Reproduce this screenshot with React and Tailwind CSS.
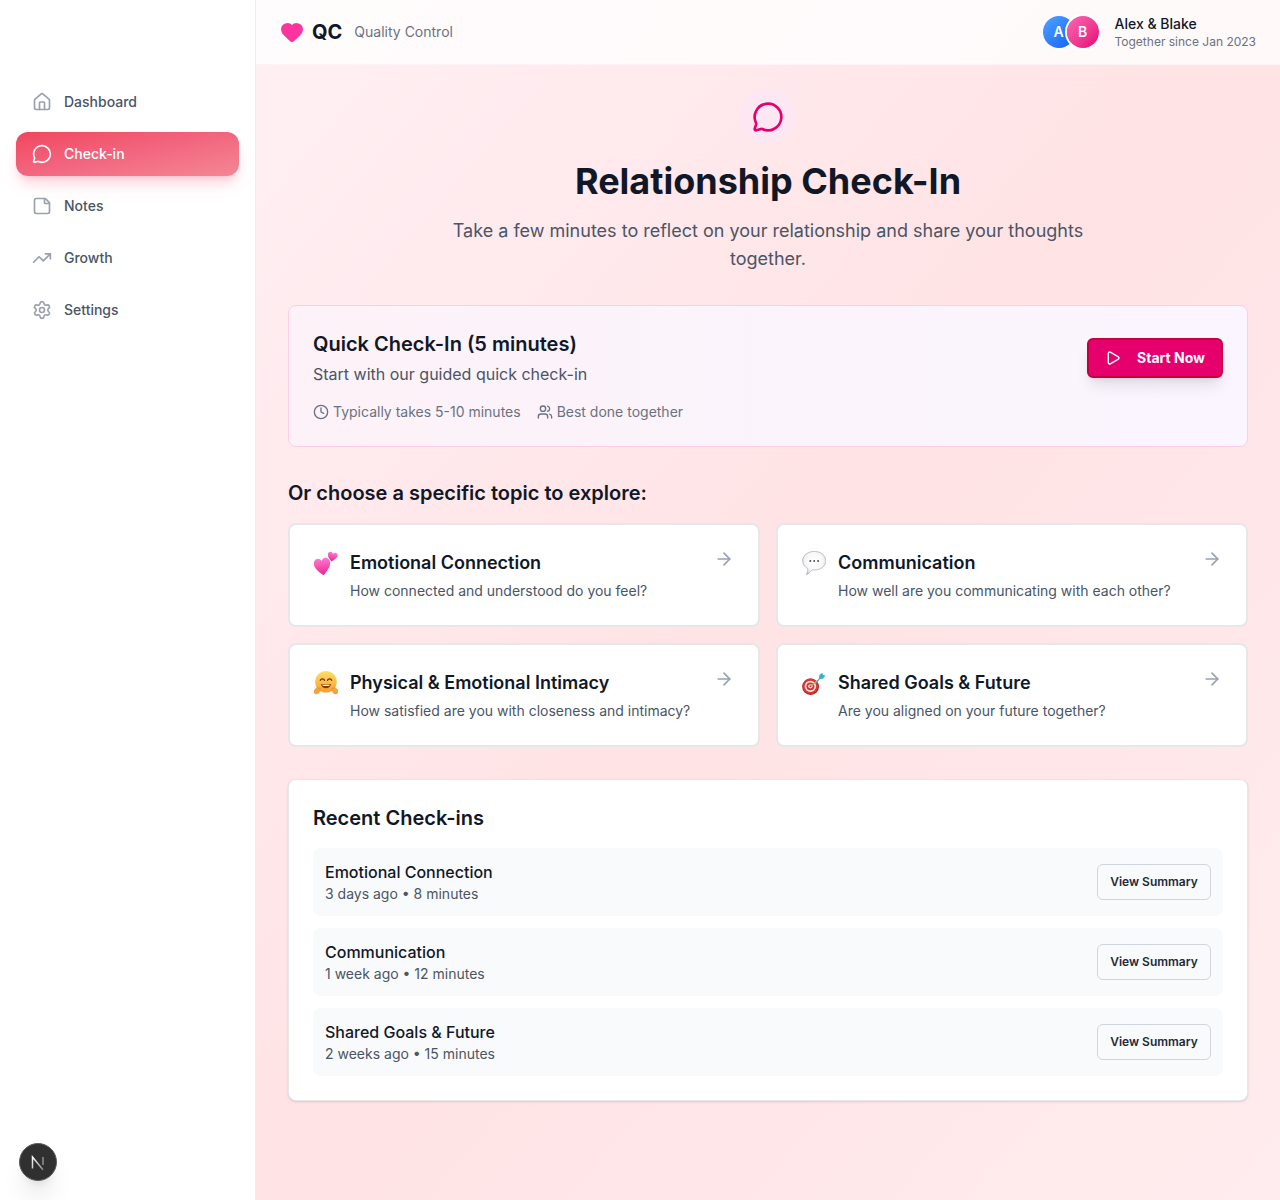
import { ArrowRight, Clock, Heart, House, MessageCircle, Play, Settings, StickyNote, TrendingUp, Users } from "lucide-react";

const NAV = [
  { label: "Dashboard", icon: House },
  { label: "Check-in", icon: MessageCircle, active: true },
  { label: "Notes", icon: StickyNote },
  { label: "Growth", icon: TrendingUp },
  { label: "Settings", icon: Settings },
];

const HEART = "M12 22C5.500 16.500 1 12.500 1 7.500 1 3.900 3.800 1.500 6.800 1.500 9 1.500 11 2.700 12 5 13 2.700 15 1.500 17.200 1.500 20.200 1.500 23 3.900 23 7.500 23 12.500 18.500 16.500 12 22Z";

function HeartsEmoji() {
  return (
    <svg width="24" height="24" viewBox="0 0 24 24">
      <defs>
        <linearGradient id="hearts" x1="0" y1="0" x2="0" y2="1">
          <stop offset="0" stopColor="#ff7ad0" />
          <stop offset="1" stopColor="#e9258f" />
        </linearGradient>
      </defs>
      <path d={HEART} fill="url(#hearts)" transform="translate(-0.500 6) rotate(-8 8 9) scale(0.74 0.84)" />
      <path d={HEART} fill="url(#hearts)" transform="translate(13 0.500) rotate(12 5 5) scale(0.45)" />
    </svg>
  );
}

function BubbleEmoji() {
  return (
    <svg width="24" height="24" viewBox="0 0 24 24">
      <defs>
        <radialGradient id="bubble" cx=".5" cy=".42" r=".62">
          <stop offset="0" stopColor="#ffffff" />
          <stop offset=".6" stopColor="#f8f8fa" />
          <stop offset=".85" stopColor="#dfe0e4" />
          <stop offset="1" stopColor="#a9abb2" />
        </radialGradient>
      </defs>
      <path d="M12.300.4C18.700.4 23.800 4.500 23.800 9.800S18.700 19 12.300 19c-.8 0-1.600-.1-2.300-.2-1.400 2-3.700 4.300-5.600 4.800 1.100-2 1.500-4 1.300-6C2.700 15.900.6 13 .6 9.800.6 4.500 5.900.4 12.300.4Z" fill="url(#bubble)" stroke="#a9abb2" strokeWidth=".7" />
      <circle cx="8.300" cy="10" r="1" fill="#4d5057" />
      <circle cx="12.200" cy="10" r="1" fill="#4d5057" />
      <circle cx="16.100" cy="10" r="1" fill="#4d5057" />
    </svg>
  );
}

function HugEmoji() {
  return (
    <svg width="24" height="24" viewBox="0 0 24 24">
      <defs>
        <linearGradient id="hug" x1="0" y1="0" x2="0" y2="1">
          <stop offset="0" stopColor="#ffdf66" />
          <stop offset="1" stopColor="#fa9c2c" />
        </linearGradient>
      </defs>
      <circle cx="12" cy="10.800" r="10.800" fill="url(#hug)" />
      <path d="M6.300 9.300c.8-1.800 3.400-1.800 4.200 0M13.500 9.300c.8-1.800 3.400-1.800 4.200 0" fill="none" stroke="#5f3410" strokeWidth="1.300" strokeLinecap="round" />
      <path d="M7 13c3.200 1 6.800 1 10 0-.4 2.700-2.400 4.300-5 4.300S7.400 15.700 7 13Z" fill="#7a3f12" />
      <path d="M8.300 13.700c2.300.5 5.100.5 7.400 0l-.4 1c-2.100.4-4.500.4-6.600 0Z" fill="#fff3dc" />
      <path d="M0 21.300c-.4-1.600.6-3 1.700-3.500l1.300-1.300c.7-.6 1.600.2 1.100 1l1.200-.5c1.100-.3 1.500.8.900 1.500l-.8 2.300c-.6 1.500-1.800 2.300-3.100 2.100C1.300 22.900.3 22.200 0 21.300ZM24 21.300c.4-1.600-.6-3-1.700-3.500L21 16.500c-.7-.6-1.600.2-1.100 1l-1.200-.5c-1.100-.3-1.500.8-.9 1.500l.8 2.300c.6 1.500 1.800 2.300 3.100 2.100 1 0 2-.7 2.300-1.600Z" fill="#f3a53c" stroke="#d9801f" strokeWidth=".4" />
    </svg>
  );
}

function DartEmoji() {
  return (
    <svg width="24" height="24" viewBox="0 0 24 24">
      <ellipse cx="8.600" cy="15.700" rx="8.400" ry="8.200" fill="#a81a20" />
      <ellipse cx="8.400" cy="15.300" rx="7.800" ry="7.700" fill="#dc3532" />
      <ellipse cx="8.400" cy="15.300" rx="5.700" ry="5.600" fill="#f6e7e2" />
      <ellipse cx="8.400" cy="15.300" rx="4" ry="3.900" fill="#d62f2d" />
      <ellipse cx="8.400" cy="15.300" rx="2.200" ry="2.100" fill="#f6e7e2" />
      <circle cx="8.400" cy="15.300" r="1" fill="#d62f2d" />
      <path d="M9 14.800 15 10" stroke="#d9a05a" strokeWidth="1.400" strokeLinecap="round" />
      <path d="M13.800 11.200 17 7.200l.3-3.200 3.200-2.200.5 2.200 2.500.6-2.500 3.200-3.200.2-3 4.200Z" fill="#38b3c4" />
    </svg>
  );
}

const TOPICS = [
  { title: "Emotional Connection", text: "How connected and understood do you feel?", emoji: HeartsEmoji },
  { title: "Communication", text: "How well are you communicating with each other?", emoji: BubbleEmoji },
  { title: "Physical & Emotional Intimacy", text: "How satisfied are you with closeness and intimacy?", emoji: HugEmoji },
  { title: "Shared Goals & Future", text: "Are you aligned on your future together?", emoji: DartEmoji },
];

const RECENT = [
  { title: "Emotional Connection", meta: "3 days ago • 8 minutes" },
  { title: "Communication", meta: "1 week ago • 12 minutes" },
  { title: "Shared Goals & Future", meta: "2 weeks ago • 15 minutes" },
];

function Sidebar() {
  return (
    <aside className="relative w-[256px] shrink-0 border-r border-pink-100 bg-white px-4 pt-20">
      <nav className="flex flex-col gap-2">
        {NAV.map(({ label, icon: Icon, active }) => (
          <a
            key={label}
            className={
              active
                ? "flex h-11 w-[223px] items-center gap-3 rounded-xl bg-gradient-to-br from-[#f2455f] via-[#f2667f] to-[#f48793] px-4 text-sm font-medium text-white shadow-lg shadow-rose-500/20"
                : "flex h-11 w-[223px] items-center gap-3 rounded-xl px-4 text-sm font-medium text-gray-600"
            }
          >
            <Icon size={20} strokeWidth={2} className={active ? "text-white" : "text-gray-400"} />
            {label}
          </a>
        ))}
      </nav>
      <div className="absolute bottom-[19px] left-[19px] flex h-[38px] w-[38px] items-center justify-center rounded-full border border-[#5c5c5c] bg-[#303030] shadow-xl shadow-black/10">
        <svg width="16" height="16" viewBox="0 0 16 16" fill="none" className="mt-[2px]">
          <defs>
            <linearGradient id="next-n" x1="0" y1="0" x2="1" y2="1">
              <stop offset="0" stopColor="#ffffff" />
              <stop offset="1" stopColor="#8a8a8a" />
            </linearGradient>
          </defs>
          <path d="M2.500 13.500V2l10.500 12.800" stroke="url(#next-n)" strokeWidth="1.500" />
          <path d="M13 2v8" stroke="#a8a8a8" strokeWidth="1.200" />
        </svg>
      </div>
    </aside>
  );
}

function Header() {
  return (
    <header className="flex h-[65px] items-center justify-between border-b border-pink-50 bg-white/80 px-6">
      <div className="flex items-center gap-3">
        <div className="flex items-center gap-2">
          <Heart size={24} className="fill-[#fb35a0] text-[#fb35a0]" />
          <span className="text-xl font-bold text-gray-900">QC</span>
        </div>
        <span className="text-sm text-gray-500">Quality Control</span>
      </div>
      <div className="flex items-center gap-4">
        <div className="flex -space-x-2">
          <div className="flex h-8 w-8 items-center justify-center rounded-full bg-gradient-to-br from-blue-400 to-blue-600 text-sm font-semibold text-white">A</div>
          <div className="flex h-8 w-8 items-center justify-center rounded-full bg-gradient-to-br from-pink-400 to-pink-600 text-sm font-semibold text-white ring-2 ring-white">B</div>
        </div>
        <div>
          <p className="text-sm font-medium leading-5 text-gray-900">Alex &amp; Blake</p>
          <p className="text-xs leading-4 text-gray-500">Together since Jan 2023</p>
        </div>
      </div>
    </header>
  );
}

export default function App() {
  return (
    <div className="flex min-h-screen bg-white font-[Inter,sans-serif] antialiased">
      <Sidebar />
      <div className="min-w-0 flex-1 bg-gradient-to-br from-[#fff0f4] via-[#ffe3e5] to-[#ffecee]">
        <Header />
        <main className="px-8 pt-6">
          <div className="text-center">
            <div className="mx-auto flex h-14 w-14 items-center justify-center rounded-full bg-pink-100">
              <MessageCircle size={32} className="text-[#e6006e]" />
            </div>
            <h1 className="mt-4 text-4xl font-bold leading-10 text-gray-900">Relationship Check-In</h1>
            <p className="mx-auto mt-4 max-w-2xl text-lg leading-7 text-gray-600">
              Take a few minutes to reflect on your relationship and share your thoughts together.
            </p>
          </div>

          <section className="mt-8 flex items-start justify-between rounded-lg border border-pink-200 bg-gradient-to-r from-pink-50 to-purple-50 p-6">
            <div>
              <h2 className="text-xl font-semibold leading-7 text-gray-900">Quick Check-In (5 minutes)</h2>
              <p className="mt-1 text-base leading-6 text-gray-600">Start with our guided quick check-in</p>
              <div className="mt-4 flex items-center gap-4 text-sm text-gray-500">
                <span className="flex items-center gap-1"><Clock size={16} />Typically takes 5-10 minutes</span>
                <span className="flex items-center gap-1"><Users size={16} />Best done together</span>
              </div>
            </div>
            <button className="mt-2 flex h-10 w-[136px] items-center justify-center gap-4 rounded-md border-2 border-[#c4003c] bg-[#e6006e] text-sm font-bold text-white shadow-lg">
              <Play size={16} />
              Start Now
            </button>
          </section>

          <section className="mt-8">
            <h2 className="text-xl font-semibold leading-7 text-gray-900">Or choose a specific topic to explore:</h2>
            <div className="mt-4 grid grid-cols-2 gap-4">
              {TOPICS.map(({ title, text, emoji: Emoji }) => (
                <div key={title} className="flex items-start justify-between rounded-lg border-2 border-gray-200 bg-white p-6">
                  <div className="flex items-start gap-3">
                    <div className="mt-[2px] shrink-0"><Emoji /></div>
                    <div>
                      <h3 className="text-lg font-semibold leading-7 text-gray-900">{title}</h3>
                      <p className="mt-1 text-sm leading-5 text-gray-600">{text}</p>
                    </div>
                  </div>
                  <ArrowRight size={20} className="text-gray-400" />
                </div>
              ))}
            </div>
          </section>

          <section className="mt-8 rounded-lg border border-gray-200 bg-white p-6 shadow-sm">
            <h2 className="text-xl font-semibold leading-7 text-gray-900">Recent Check-ins</h2>
            <div className="mt-4 flex flex-col gap-3">
              {RECENT.map(({ title, meta }) => (
                <div key={title} className="flex h-[68px] items-center justify-between rounded-lg bg-gray-50 px-3">
                  <div>
                    <p className="text-base font-medium leading-6 text-gray-900">{title}</p>
                    <p className="text-sm leading-5 text-gray-600">{meta}</p>
                  </div>
                  <button className="h-9 w-[114px] rounded-md border border-gray-300 bg-gray-50 text-xs font-semibold text-gray-800">View Summary</button>
                </div>
              ))}
            </div>
          </section>
        </main>
      </div>
    </div>
  );
}
